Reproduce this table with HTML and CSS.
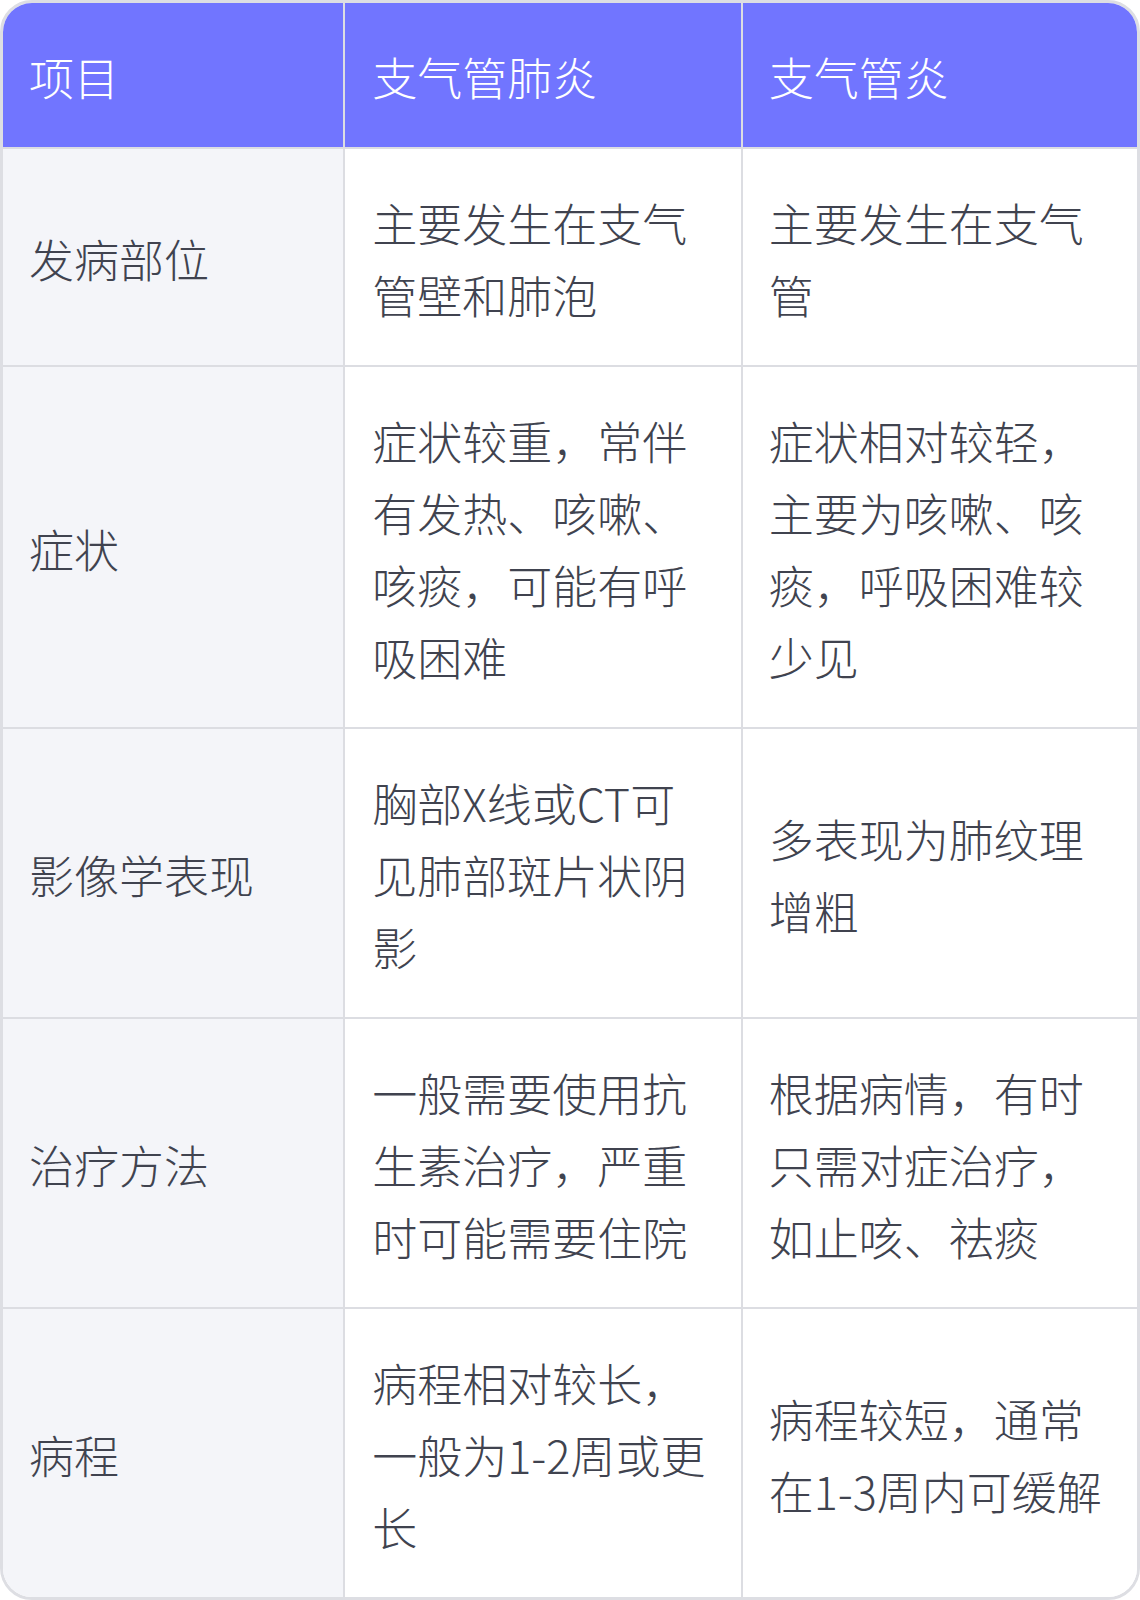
FILE: index.html
```html
<!DOCTYPE html>
<html lang="zh-CN">
<head>
<meta charset="utf-8">
<title>支气管肺炎与支气管炎对比</title>
<link rel="stylesheet" href="styles.css">
</head>
<body>
<div class="wrap">
<table class="cmp">
  <thead>
    <tr>
      <th class="c1">项目</th>
      <th class="c2">支气管肺炎</th>
      <th class="c3">支气管炎</th>
    </tr>
  </thead>
  <tbody>
    <tr>
      <td class="c1">发病部位</td>
      <td class="c2">主要发生在支气管壁和肺泡</td>
      <td class="c3">主要发生在支气管</td>
    </tr>
    <tr>
      <td class="c1">症状</td>
      <td class="c2">症状较重，常伴有发热、咳嗽、咳痰，可能有呼吸困难</td>
      <td class="c3">症状相对较轻，主要为咳嗽、咳痰，呼吸困难较少见</td>
    </tr>
    <tr>
      <td class="c1">影像学表现</td>
      <td class="c2">胸部X线或CT可见肺部斑片状阴影</td>
      <td class="c3">多表现为肺纹理增粗</td>
    </tr>
    <tr>
      <td class="c1">治疗方法</td>
      <td class="c2">一般需要使用抗生素治疗，严重时可能需要住院</td>
      <td class="c3">根据病情，有时只需对症治疗，如止咳、祛痰</td>
    </tr>
    <tr>
      <td class="c1">病程</td>
      <td class="c2">病程相对较长，一般为1-2周或更长</td>
      <td class="c3">病程较短，通常在1-3周内可缓解</td>
    </tr>
  </tbody>
</table>
</div>
</body>
</html>
```
FILE: styles.css
```css
html, body {
  margin: 0;
  padding: 0;
  background: #ffffff;
}
.wrap {
  width: 1140px;
}
.cmp {
  width: 1140px;
  border-collapse: separate;
  border-spacing: 0;
  border: 3px solid #dddee3;
  border-radius: 32px;
  overflow: hidden;
  table-layout: fixed;
  font-family: "Noto Sans CJK SC", "Noto Sans", sans-serif;
  font-size: 45px;
  line-height: 72px;
  font-weight: 300;
  color: #40434f;
}
.cmp th, .cmp td {
  padding: 38px 27px 34px;
  text-align: left;
  vertical-align: middle;
  font-weight: 300;
  border-right: 2px solid #dcdde2;
  border-bottom: 2px solid #dcdde2;
  word-break: break-all;
}
.cmp th.c1, .cmp td.c1 {
  padding-left: 26px;
}
.cmp th.c3, .cmp td.c3 {
  border-right: none;
  padding-left: 26px;
}
.cmp tbody tr:last-child td {
  border-bottom: none;
}
.cmp th {
  background: #7175ff;
  color: #ffffff;
}
.cmp td.c1 {
  background: #f4f5f9;
}
.cmp td.c2, .cmp td.c3 {
  background: #ffffff;
}
.c1 { width: 287px; }
.c2 { width: 341px; }
.c3 { width: 341px; }
```
